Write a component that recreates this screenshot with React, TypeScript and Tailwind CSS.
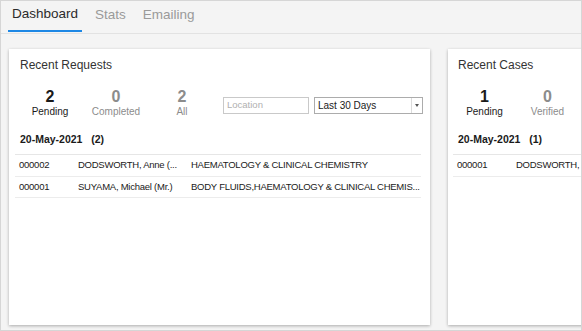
import React from "react";

const font = { fontFamily: '"Liberation Sans", Arial, sans-serif' };

function Stat({ n, label, active, w }: { n: string; label: string; active?: boolean; w: string }) {
  return (
    <div className={`${w} shrink-0 flex flex-col items-center`}>
      <div className={`text-[16px] leading-[18px] font-bold ${active ? "text-[#1a1a1a]" : "text-[#8c8c8c]"}`}>{n}</div>
      <div className={`text-[10px] leading-[12px] ${active ? "text-[#1a1a1a]" : "text-[#8c8c8c]"}`}>{label}</div>
    </div>
  );
}

export default function App() {
  return (
    <div style={font} className="w-[582px] h-[331px] border border-[#d6d6d6] bg-[#f4f4f4] flex flex-col overflow-hidden">
      <div className="h-[33px] shrink-0 border-b border-[#e2e2e2] flex items-start pl-[7px] gap-[9px]">
        <div className="h-[31px] px-[4px] pb-[3px] flex items-center border-b-2 border-[#1e88e5] text-[13.5px] text-[#2b2b2b]">Dashboard</div>
        <div className="h-[31px] px-[4px] pb-[3px] flex items-center text-[13.5px] text-[#9a9a9a]">Stats</div>
        <div className="h-[31px] px-[4px] pb-[3px] flex items-center text-[13.5px] text-[#9a9a9a]">Emailing</div>
      </div>
      <div className="flex pt-[15px] pl-[8px] gap-[18px]">
        {/* Card 1 */}
        <div className="w-[421px] h-[276px] shrink-0 bg-white shadow-[0_1px_3px_rgba(0,0,0,0.3)] flex flex-col">
          <div className="pt-[9px] pl-[11px] text-[12px] leading-[14px] text-[#333]">Recent Requests</div>
          <div className="flex items-start mt-[16px] pl-[8px]">
            <Stat n="2" label="Pending" active w="w-[66px]" />
            <Stat n="0" label="Completed" w="w-[66px]" />
            <Stat n="2" label="All" w="w-[66px]" />
            <div className="ml-[8px] mt-[9px] w-[86px] h-[17px] shrink-0 border border-[#c9c9c9] bg-white flex items-center pl-[3px] text-[9.5px] text-[#b0b0b0]">
              Location
            </div>
            <div className="ml-[5px] mt-[9px] w-[109px] h-[17px] shrink-0 border border-[#acacac] bg-white flex items-stretch">
              <div className="flex-1 flex items-center pl-[3px] text-[10px] text-[#1a1a1a]">Last 30 Days</div>
              <div className="w-[11px] border-l border-[#dcdcdc] flex items-center justify-center">
                <div className="w-0 h-0 border-l-[2.5px] border-r-[2.5px] border-t-[3px] border-l-transparent border-r-transparent border-t-[#555]" />
              </div>
            </div>
          </div>
          <div className="mt-[15px] pl-[11px] text-[10.5px] leading-[12px] font-bold text-[#1a1a1a] whitespace-pre">20-May-2021   (2)</div>
          <div className="mt-[9px] ml-[6px] mr-[9px] border-t border-[#e6e6e6] text-[9.5px] tracking-[-0.25px] text-[#1a1a1a]">
            <div className="h-[22px] flex items-center border-b border-[#ececec] whitespace-nowrap overflow-hidden">
              <div className="w-[63px] shrink-0 pl-[4px]">000002</div>
              <div className="w-[113px] shrink-0">DODSWORTH, Anne (...</div>
              <div className="shrink-0">HAEMATOLOGY &amp; CLINICAL CHEMISTRY</div>
            </div>
            <div className="h-[21px] flex items-center border-b border-[#ececec] whitespace-nowrap overflow-hidden">
              <div className="w-[63px] shrink-0 pl-[4px]">000001</div>
              <div className="w-[113px] shrink-0">SUYAMA, Michael (Mr.)</div>
              <div className="shrink-0">BODY FLUIDS,HAEMATOLOGY &amp; CLINICAL CHEMIS...</div>
            </div>
          </div>
        </div>
        {/* Card 2 */}
        <div className="w-[421px] h-[276px] shrink-0 bg-white shadow-[0_1px_3px_rgba(0,0,0,0.3)] flex flex-col">
          <div className="pt-[9px] pl-[10px] text-[12px] leading-[14px] text-[#333]">Recent Cases</div>
          <div className="flex items-start mt-[16px] pl-[5px]">
            <Stat n="1" label="Pending" active w="w-[63px]" />
            <Stat n="0" label="Verified" w="w-[63px]" />
          </div>
          <div className="mt-[15px] pl-[10px] text-[10.5px] leading-[12px] font-bold text-[#1a1a1a] whitespace-pre">20-May-2021   (1)</div>
          <div className="mt-[9px] ml-[5px] border-t border-[#e6e6e6] text-[9.5px] tracking-[-0.25px] text-[#1a1a1a]">
            <div className="h-[22px] flex items-center border-b border-[#ececec] whitespace-nowrap">
              <div className="w-[63px] shrink-0 pl-[4px]">000001</div>
              <div className="shrink-0">DODSWORTH,</div>
            </div>
          </div>
        </div>
      </div>
    </div>
  );
}
